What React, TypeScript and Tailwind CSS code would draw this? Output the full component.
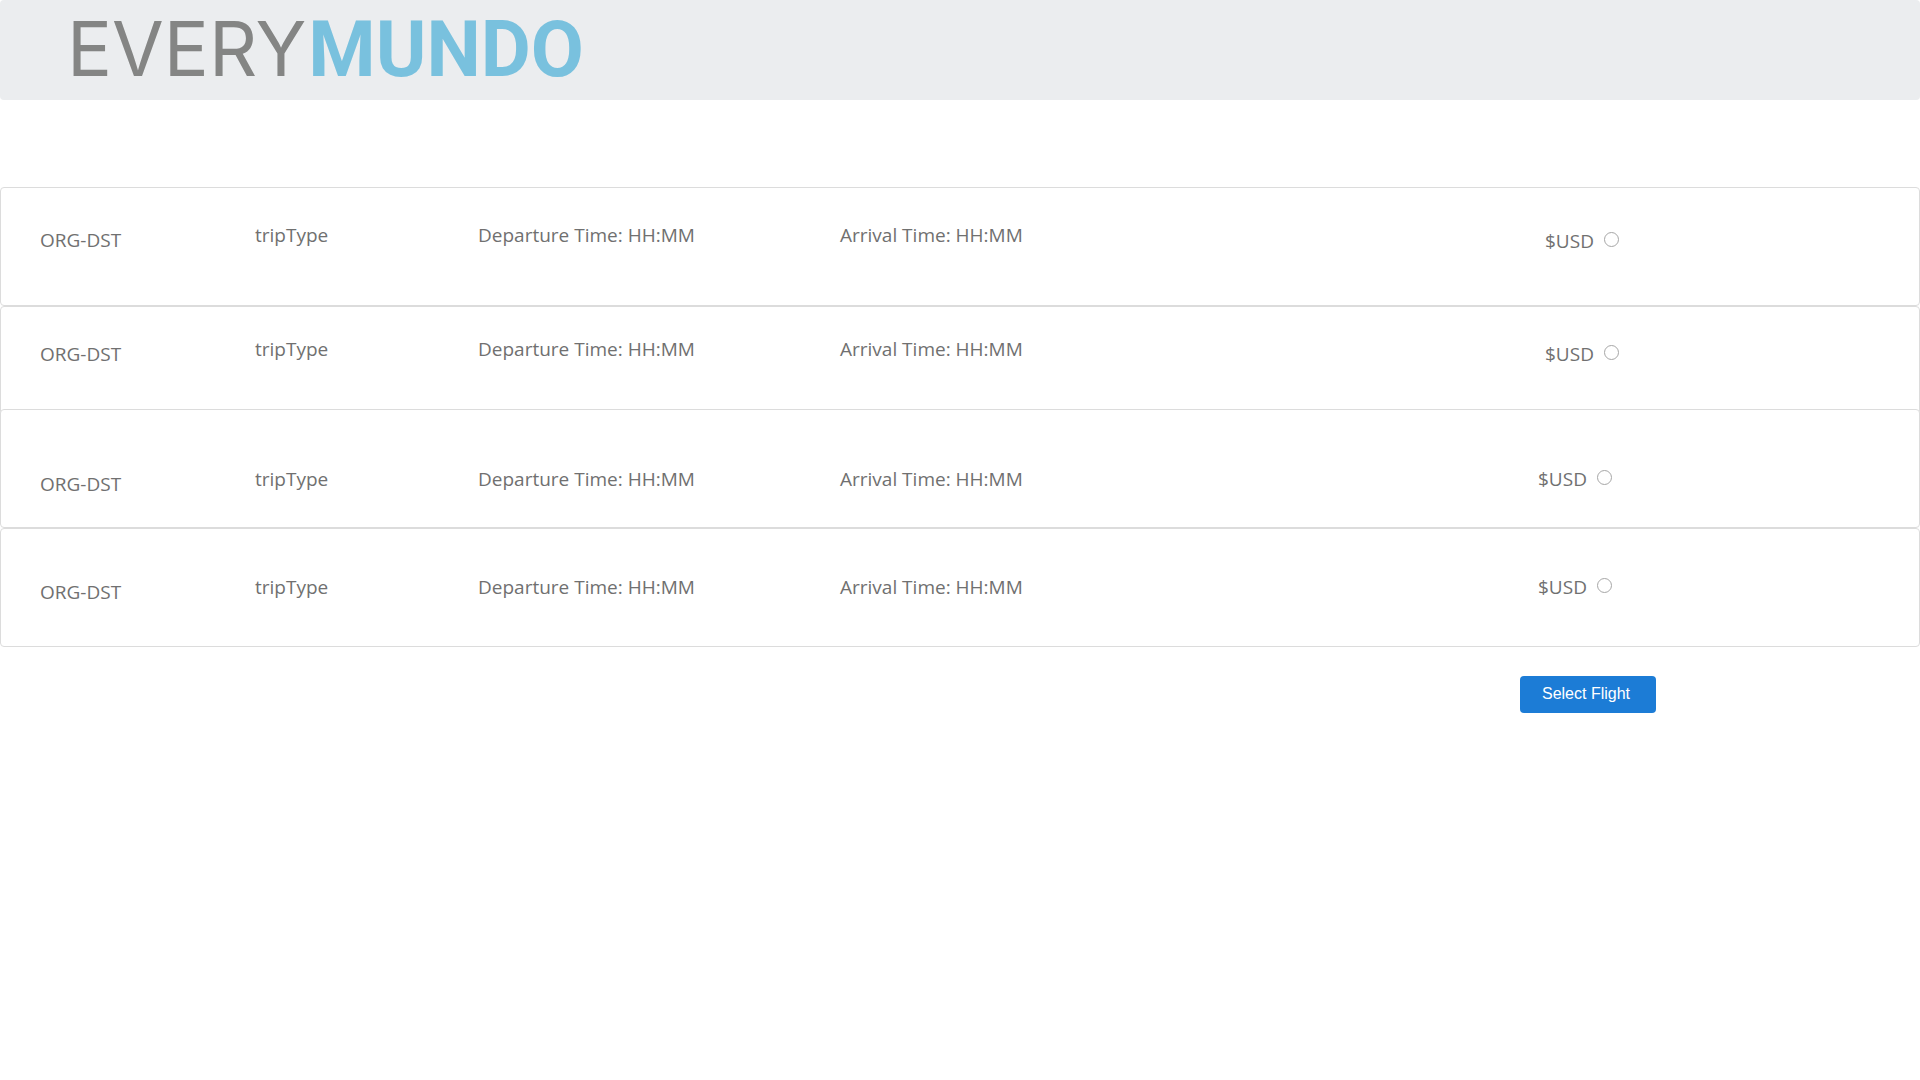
type Flight = { id: string; card: string; middle: string; price: string };

const flights: Flight[] = [
  { id: "flight-1", card: "h-[119px]", middle: "pt-[35px]", price: "pt-[41px] pl-[7px]" },
  { id: "flight-2", card: "h-[119px]", middle: "pt-[30px]", price: "pt-[35px] pl-[7px]" },
  { id: "flight-3", card: "h-[119px] -mt-4", middle: "pt-[57px]", price: "pt-[57px]" },
  { id: "flight-4", card: "h-[119px]", middle: "pt-[46px]", price: "pt-[46px]" },
];

function Logo() {
  return (
    <h1 className="flex items-baseline gap-0.5 leading-none text-[#848584]">
      <span className="font-['Inter',sans-serif] text-[75px] font-normal">EVERY</span>
      <b className="font-['Roboto',sans-serif] text-[77px] font-bold text-[#79c1de]">MUNDO</b>
    </h1>
  );
}

function FlightCard({ flight }: { flight: Flight }) {
  return (
    <li
      className={`grid grid-cols-[215fr_223fr_362fr_698fr_381fr] items-start rounded-[4px] border border-[#dcdcdc] bg-white pl-[39px] ${flight.card}`}
    >
      <div className={flight.middle}>
        <p className="mt-[5px]">ORG-DST</p>
      </div>
      <p className={flight.middle}>tripType</p>
      <p className={flight.middle}>Departure Time: HH:MM</p>
      <p className={flight.middle}>Arrival Time: HH:MM</p>
      <div className={flight.price}>
        <label htmlFor={flight.id} className="flex items-start gap-[10px]">
          $USD
          <input
            id={flight.id}
            type="radio"
            name="flight"
            className="mt-[3px] size-[15px] appearance-none rounded-full border border-[#a6a6a6] bg-white checked:border-4 checked:border-[#1c7cd6]"
          />
        </label>
      </div>
    </li>
  );
}

export default function App() {
  return (
    <div className="min-h-screen bg-white font-['Open_Sans',sans-serif] text-[19px] leading-6 text-[#707070]">
      <header className="flex h-[100px] items-center rounded-[4px] bg-[#ebedef] pl-[67px]">
        <Logo />
      </header>
      <form className="mt-[87px]" onSubmit={(e) => e.preventDefault()}>
        <ul>
          {flights.map((flight) => (
            <FlightCard key={flight.id} flight={flight} />
          ))}
        </ul>
        <div className="mt-[29px] grid grid-cols-[1520fr_400fr]">
          <button
            type="submit"
            className="col-start-2 h-[37px] w-[136px] rounded-[4px] bg-[#1c7cd6] pr-1 pb-[2px] font-['Liberation_Sans',sans-serif] text-base text-white"
          >
            Select Flight
          </button>
        </div>
      </form>
    </div>
  );
}
